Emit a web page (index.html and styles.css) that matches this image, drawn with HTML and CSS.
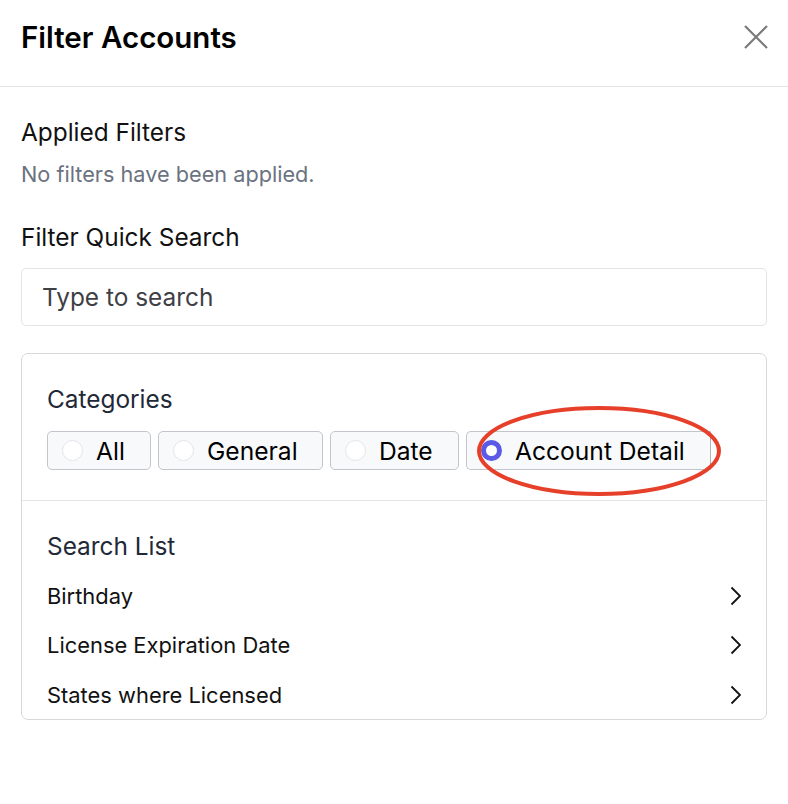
FILE: index.html
```html
<!DOCTYPE html>
<html>
<head>
<meta charset="utf-8">
<link rel="stylesheet" href="styles.css">
</head>
<body>
<div class="panel">
  <header class="header">
    <h1 class="title">Filter Accounts</h1>
    <button class="close" aria-label="Close">
      <svg width="26" height="26" viewBox="0 0 26 26"><path d="M2 2 L24 24 M24 2 L2 24" stroke="#7a7a7a" stroke-width="2.2" fill="none"/></svg>
    </button>
  </header>
  <main class="body">
    <section class="applied">
      <h2 class="label">Applied Filters</h2>
      <p class="muted">No filters have been applied.</p>
    </section>
    <section class="quick">
      <h2 class="label">Filter Quick Search</h2>
      <div class="input">Type to search</div>
    </section>
    <section class="card">
      <div class="cats">
        <h3 class="label dark">Categories</h3>
        <div class="chips">
          <div class="chip chip-all"><span class="radio"></span><span>All</span></div>
          <div class="chip chip-general"><span class="radio"></span><span>General</span></div>
          <div class="chip chip-date"><span class="radio"></span><span>Date</span></div>
          <div class="chip chip-acct selected"><span class="radio on"></span><span>Account Detail</span>
            <svg class="ring" width="250" height="96" viewBox="0 0 250 96"><ellipse cx="125" cy="48" rx="120" ry="43" fill="none" stroke="#e6402b" stroke-width="4"/></svg>
          </div>
        </div>
      </div>
      <div class="list">
        <h3 class="label dark">Search List</h3>
        <div class="item"><span>Birthday</span><svg class="chev" width="12" height="20" viewBox="0 0 12 20"><path d="M2.5 1.5 L11 10 L2.5 18.5" stroke="#111" stroke-width="1.8" fill="none"/></svg></div>
        <div class="item"><span>License Expiration Date</span><svg class="chev" width="12" height="20" viewBox="0 0 12 20"><path d="M2.5 1.5 L11 10 L2.5 18.5" stroke="#111" stroke-width="1.8" fill="none"/></svg></div>
        <div class="item"><span>States where Licensed</span><svg class="chev" width="12" height="20" viewBox="0 0 12 20"><path d="M2.5 1.5 L11 10 L2.5 18.5" stroke="#111" stroke-width="1.8" fill="none"/></svg></div>
      </div>
    </section>
  </main>
</div>
</body>
</html>
```

FILE: styles.css
```css
* { box-sizing: border-box; }
html, body { margin: 0; padding: 0; background: #fff; }
body { font-family: Inter, "Liberation Sans", sans-serif; color: #111; }

.header {
  height: 87px;
  display: flex;
  align-items: center;
  justify-content: space-between;
  padding: 0 19px 12px 21px;
  border-bottom: 1px solid #e2e3e7;
}
.title {
  margin: 0;
  font-family: Inter, "Liberation Sans", sans-serif;
  font-weight: 600;
  font-size: 29.5px;
  letter-spacing: 0;
  color: #000;
}
.close {
  border: 0;
  background: none;
  padding: 0;
  width: 26px;
  height: 26px;
  display: flex;
}

.body { padding: 30px 21px 0 21px; }

.label {
  margin: 0;
  font-size: 24.4px;
  font-weight: 400;
  color: #111;
  line-height: 30px;
}
.label.dark { color: #1f2937; }

.muted {
  margin: 14px 0 0 0;
  font-size: 21.7px;
  line-height: 26px;
  color: #6b7280;
}

.quick { margin-top: 35px; }
.input {
  margin-top: 16px;
  height: 58px;
  border: 1px solid #e3e4e8;
  border-radius: 5px;
  padding: 0 20px;
  display: flex;
  align-items: center;
  font-size: 24.4px;
  color: #3f4045;
}

.card {
  margin-top: 27px;
  border: 1px solid #d6d8dc;
  border-radius: 7px;
  height: 367px;
}
.cats {
  padding: 30px 25px 30px 25px;
  border-bottom: 1px solid #e3e4e8;
}
.chips {
  margin-top: 17px;
  display: flex;
  gap: 7px;
}
.chip {
  position: relative;
  height: 39px;
  display: flex;
  align-items: center;
  gap: 13px;
  padding: 0 14px;
  background: #f8f9fa;
  border: 1px solid #c2c5cb;
  border-radius: 5px;
  font-size: 24.6px;
  color: #000;
}
.chip-all { width: 104px; }
.chip-general { width: 165px; }
.chip-date { width: 129px; }
.chip-acct { width: 245px; border-right-color: #b0b3b9; border-radius: 5px 0 0 5px; }
.radio {
  width: 21px;
  height: 21px;
  border-radius: 50%;
  border: 1px solid #e4e5e9;
  background: #fff;
  flex: none;
}
.radio.on {
  border: 5px solid #5a5ae6;
  background: #fff;
}
.ring {
  position: absolute;
  left: 7px;
  top: -29px;
  pointer-events: none;
}

.list { padding: 30px 25px 0 25px; }
.list .label { margin-bottom: 10px; }
.item {
  height: 49.5px;
  display: flex;
  align-items: center;
  justify-content: space-between;
  font-size: 21.9px;
  color: #111;
  padding-right: 0;
}
```
